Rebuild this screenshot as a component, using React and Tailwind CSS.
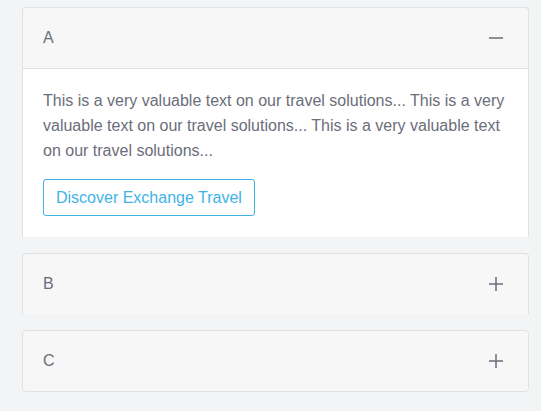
import { useState } from 'react';

const items = [
  {
    key: 'A',
    body: 'This is a very valuable text on our travel solutions... This is a very valuable text on our travel solutions... This is a very valuable text on our travel solutions...',
  },
  { key: 'B', body: '' },
  { key: 'C', body: '' },
];

const Icon = ({ open }) => (
  <svg width="16" height="16" viewBox="0 0 16 16" className="text-[#6b6e7a]">
    <path d="M1 8h14" stroke="currentColor" strokeWidth="1.5" />
    {!open && <path d="M8 1v14" stroke="currentColor" strokeWidth="1.5" />}
  </svg>
);

export default function App() {
  const [open, setOpen] = useState('A');

  return (
    <div className="min-h-[411px] w-[541px] bg-[#f3f4f6] pt-[7px] pl-[22px] pr-[12px] font-['Liberation_Sans',Arial,sans-serif]">
      {items.map((item, i) => {
        const isOpen = open === item.key;
        const last = i === items.length - 1;
        return (
          <div
            key={item.key}
            className={`mb-4 rounded-t-[4px] border-x border-t border-[#e0e1e3] ${last ? 'rounded-b-[4px] border-b' : ''}`}
          >
            <button
              onClick={() => setOpen(isOpen ? null : item.key)}
              className={`flex w-full items-center justify-between bg-[#f7f7f8] pl-[20px] pr-[24px] text-[16px] text-[#6b6e7a] ${isOpen ? 'h-[61px] border-b border-[#e0e1e3]' : 'h-[60px]'} ${last ? 'rounded-[4px]' : 'rounded-t-[4px]'}`}
            >
              <span>{item.key}</span>
              <Icon open={isOpen} />
            </button>
            {isOpen && (
              <div className="bg-white px-[20px] pt-[19px] pb-[21px]">
                <p className="text-[16px] leading-[25px] text-[#6b6e7a]">{item.body}</p>
                <button className="mt-[16px] h-[37px] rounded-[3px] border border-[#3fb3e6] px-[12px] text-[16px] text-[#3fb3e6]">
                  Discover Exchange Travel
                </button>
              </div>
            )}
          </div>
        );
      })}
    </div>
  );
}
